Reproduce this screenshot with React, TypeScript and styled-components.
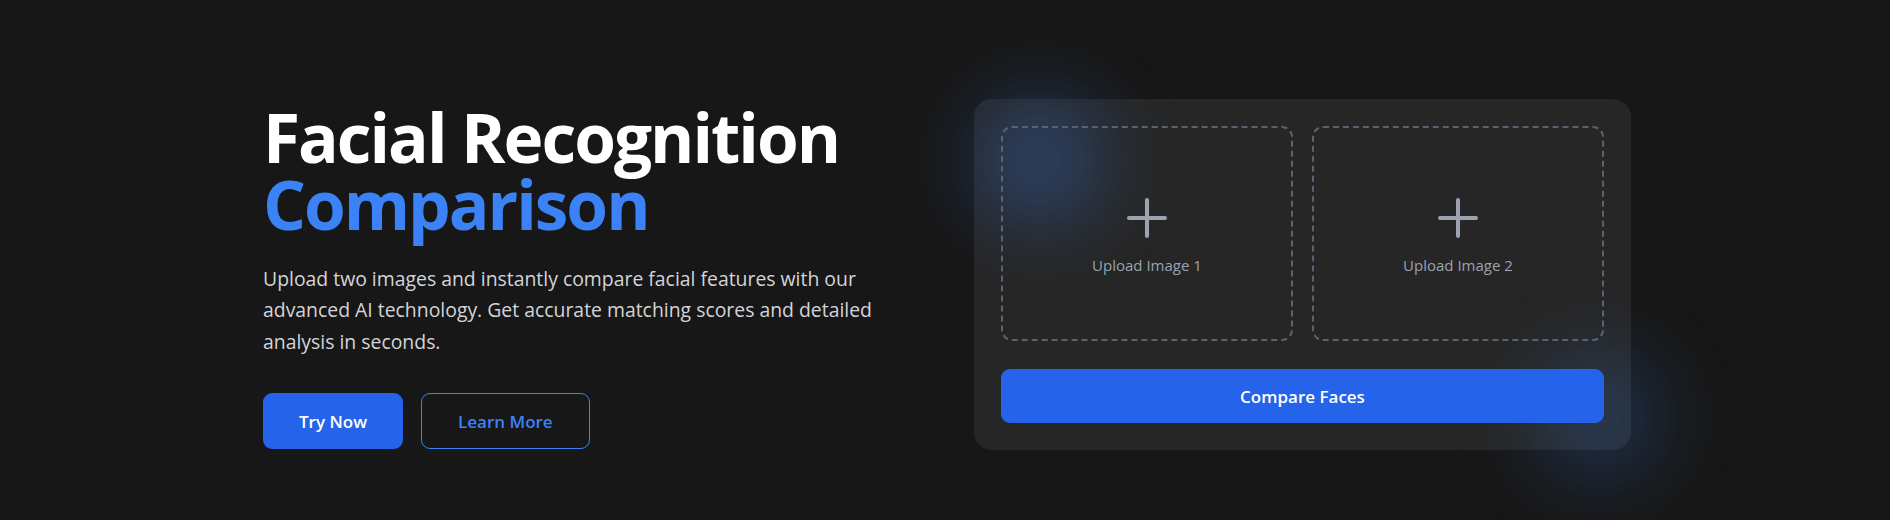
import React from "react";
import styled, { createGlobalStyle } from "styled-components";

const GlobalStyle = createGlobalStyle`
  html, body {
    margin: 0;
    padding: 0;
    background: #171717;
  }
  body {
    font-family: "Open Sans", "Noto Sans", "Liberation Sans", sans-serif;
    color: #ffffff;
  }
  * { box-sizing: border-box; }
`;

const Page = styled.main`
  width: 1890px;
  height: 520px;
  background: #171717;
  overflow: hidden;
  padding: 99px 259px 0 263px;
`;

const Grid = styled.section`
  display: grid;
  grid-template-columns: 1fr 657px;
  column-gap: 54px;
  align-items: center;
`;

const Intro = styled.div`
  display: flex;
  flex-direction: column;
  padding-top: 4px;
`;

const Title = styled.h1`
  margin: 0;
  font-size: 67.5px;
  line-height: 67.5px;
  font-weight: 700;
  letter-spacing: -2px;
  color: #ffffff;
`;

const Accent = styled.span`
  display: block;
  color: #3b82f6;
`;

const Lead = styled.p`
  margin: 24px 0 0;
  max-width: 648px;
  font-size: 19.4px;
  line-height: 31.5px;
  color: #d4d4d8;
`;

const Actions = styled.div`
  display: flex;
  gap: 18px;
  margin-top: 36px;
`;

const ActionButton = styled.button<{ $variant: "solid" | "outline" }>`
  height: 56px;
  padding: 0 36px;
  border-radius: 9px;
  font-family: inherit;
  font-size: 17px;
  font-weight: 600;
  cursor: pointer;
  background: ${(p) => (p.$variant === "solid" ? "#2563eb" : "transparent")};
  color: ${(p) => (p.$variant === "solid" ? "#ffffff" : "#3b82f6")};
  border: ${(p) => (p.$variant === "solid" ? "none" : "1.5px solid #3b82f6")};
`;

const Card = styled.div`
  position: relative;
  background: #262626;
  border-radius: 18px;
  padding: 27px;
  display: flex;
  flex-direction: column;
  gap: 28px;
`;

const Glow = styled.div<{ $corner: "tl" | "br" }>`
  position: absolute;
  width: 130px;
  height: 130px;
  border-radius: 50%;
  pointer-events: none;
  z-index: 0;
  filter: blur(38px);
  ${(p) =>
    p.$corner === "tl"
      ? "top: -4px; left: 0px; background: rgba(59, 130, 246, 0.3);"
      : "bottom: -32px; right: -32px; background: rgba(59, 130, 246, 0.22);"}
`;

const Uploads = styled.div`
  position: relative;
  z-index: 1;
  display: grid;
  grid-template-columns: 1fr 1fr;
  gap: 19px;
`;

const DropZone = styled.div`
  height: 215px;
  border: 2px dashed #5b6170;
  border-radius: 11px;
  display: flex;
  flex-direction: column;
  align-items: center;
  justify-content: center;
  gap: 9px;
  cursor: pointer;
`;

const DropLabel = styled.span`
  font-size: 15px;
  line-height: 22.5px;
  color: #9ca3af;
`;

const CompareButton = styled.button`
  position: relative;
  z-index: 1;
  height: 54px;
  width: 100%;
  border: none;
  border-radius: 9px;
  background: #2563eb;
  color: #ffffff;
  font-family: inherit;
  font-size: 17px;
  font-weight: 600;
  cursor: pointer;
`;

const PlusIcon = () => (
  <svg width="54" height="54" viewBox="0 0 24 24" fill="none" stroke="#9ca3af" strokeWidth="1.8" strokeLinecap="round">
    <path d="M12 4v16M20 12H4" />
  </svg>
);

export default function App() {
  return (
    <>
      <GlobalStyle />
      <Page>
        <Grid>
          <Intro>
            <Title>
              Facial Recognition
              <Accent>Comparison</Accent>
            </Title>
            <Lead>
              Upload two images and instantly compare facial features with our advanced AI technology. Get accurate
              matching scores and detailed analysis in seconds.
            </Lead>
            <Actions>
              <ActionButton $variant="solid">Try Now</ActionButton>
              <ActionButton $variant="outline">Learn More</ActionButton>
            </Actions>
          </Intro>
          <Card>
            <Glow $corner="tl" />
            <Glow $corner="br" />
            <Uploads>
              <DropZone>
                <PlusIcon />
                <DropLabel>Upload Image 1</DropLabel>
              </DropZone>
              <DropZone>
                <PlusIcon />
                <DropLabel>Upload Image 2</DropLabel>
              </DropZone>
            </Uploads>
            <CompareButton>Compare Faces</CompareButton>
          </Card>
        </Grid>
      </Page>
    </>
  );
}
